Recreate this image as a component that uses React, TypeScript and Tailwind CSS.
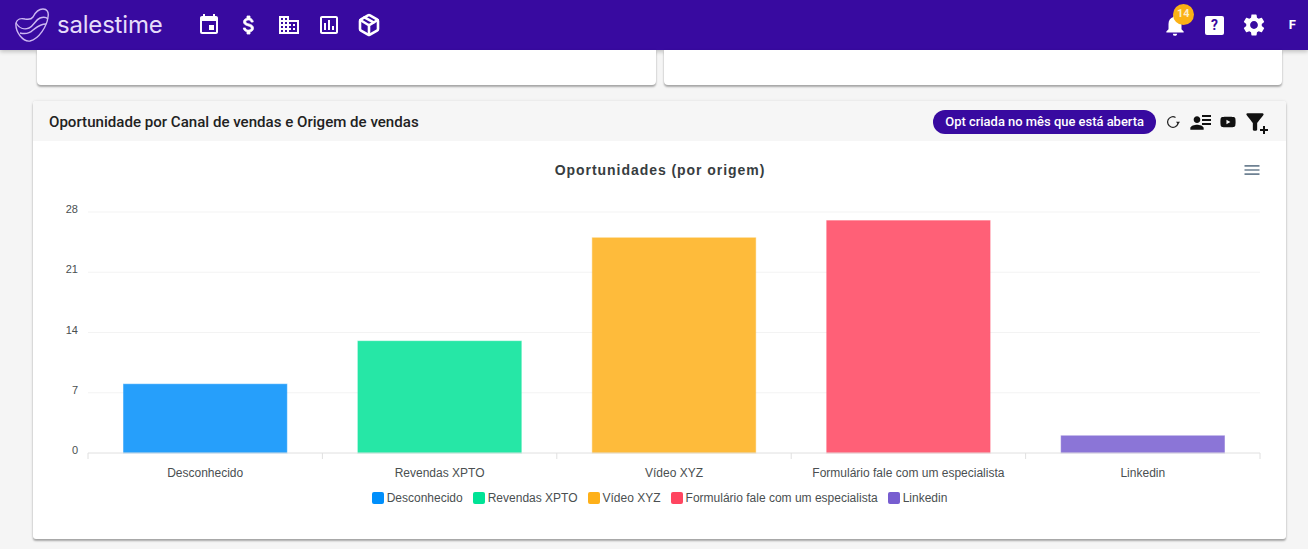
import { MdEvent, MdDomain, MdOutlineAssessment, MdNotifications, MdSettings, MdFilterAlt, MdMenu, MdPerson } from 'react-icons/md';
import { FaYoutube } from 'react-icons/fa';
import { LuPackage } from 'react-icons/lu';

const ROBOTO = "font-['Roboto',sans-serif]";

const bars = [
  { name: 'Desconhecido', value: 8, color: '#269ffb', legend: '#008ffb' },
  { name: 'Revendas XPTO', value: 13, color: '#26e7a6', legend: '#00e396' },
  { name: 'Vídeo XYZ', value: 25, color: '#febb3b', legend: '#feb019' },
  { name: 'Formulário fale com um especialista', value: 27, color: '#ff6077', legend: '#ff4560' },
  { name: 'Linkedin', value: 2, color: '#8b75d7', legend: '#775dd0' },
];

function Logo() {
  return (
    <svg width="34" height="34" viewBox="0 0 34 34" fill="none" stroke="#cdb8f2" strokeWidth="1.4" strokeLinejoin="round">
      <path d="M1 15c1-4 5-5 9-4 3 .6 6 1 8-2 2-4 5-8 10-8 4 0 6 3 5 8-1 9-9 22-18 24-7 1-15-9-14-18z" />
      <path d="M1 15c3 5 8 7 13 5 5-2 6-8 11-10 3-1 6-1 8 1" />
      <path d="M5 25c4 1 9 1 13-3 4-3 7-6 13-6" />
    </svg>
  );
}

function Money() {
  return (
    <svg width="24" height="24" viewBox="0 0 24 24" fill="white" stroke="white" strokeWidth="0.8">
      <path d="M11.8 10.9c-2.27-.59-3-1.2-3-2.15 0-1.09 1.01-1.85 2.7-1.85 1.78 0 2.44.85 2.5 2.1h2.21c-.07-1.72-1.12-3.3-3.21-3.81V3h-3v2.16c-1.94.42-3.5 1.68-3.5 3.61 0 2.31 1.91 3.46 4.7 4.13 2.5.6 3 1.48 3 2.41 0 .69-.49 1.79-2.7 1.79-2.06 0-2.87-.92-2.98-2.1h-2.2c.12 2.19 1.76 3.42 3.68 3.83V21h3v-2.15c1.95-.37 3.5-1.5 3.5-3.55 0-2.84-2.43-3.81-4.7-4.4z" />
    </svg>
  );
}

function Navbar() {
  return (
    <header className="flex h-[50px] items-center bg-[#380aa0] text-white shadow-[0_2px_4px_rgba(0,0,0,0.2)]">
      <div className="ml-[15px] flex w-[182px] items-center gap-[8px]">
        <Logo />
        <span className="font-['Inter',sans-serif] text-[24px] leading-none tracking-[-0.2px] text-[#e6dcfa]">salestime</span>
      </div>
      <nav className="flex items-center gap-[16px]">
        <MdEvent size={24} />
        <Money />
        <MdDomain size={24} />
        <MdOutlineAssessment size={24} />
        <LuPackage size={24} strokeWidth={2.6} />
      </nav>
      <div className="ml-auto flex items-center">
        <div className="relative">
          <MdNotifications size={26} />
          <span className={`${ROBOTO} absolute left-[11px] top-[-8px] flex h-[21px] w-[21px] items-center justify-center rounded-full bg-[#fbb116] text-[11px] font-bold text-[#fbeecb]`}>14</span>
        </div>
        <div className="ml-[17px] flex h-[19px] w-[19px] items-center justify-center rounded-[2px] bg-white">
          <span className={`${ROBOTO} text-[14px] font-bold leading-none text-[#380aa0]`}>?</span>
        </div>
        <MdSettings size={26} className="ml-[17px]" />
        <span className={`${ROBOTO} ml-[22px] mr-[12px] text-[13px] font-bold`}>F</span>
      </div>
    </header>
  );
}

function PersonList() {
  return (
    <span className="relative flex h-[22px] w-[22px] items-center">
      <MdPerson size={20} className="-ml-[3px] mt-[2px]" />
      <span className="absolute right-[1px] top-[4px] flex w-[9px] flex-col gap-[2px]">
        <span className="h-[2px] bg-[#111]" />
        <span className="h-[2px] bg-[#111]" />
        <span className="h-[2px] bg-[#111]" />
      </span>
    </span>
  );
}

function RefreshThin() {
  return (
    <svg width="16" height="16" viewBox="0 0 16 16" fill="none" stroke="#222" strokeWidth="1.2">
      <path d="M13 9.5A5.3 5.3 0 1 1 10.5 3.4" />
      <path d="M11 7.8h4l-2 2.6z" fill="#222" stroke="none" />
    </svg>
  );
}

function Chart() {
  const left = 88;
  const right = 1260;
  const base = 453;
  const unit = 241 / 28;
  const slot = (right - left) / bars.length;
  return (
    <svg viewBox="33 141 1253 398" className="block h-[398px] w-[1253px]" fontFamily="'Liberation Sans', sans-serif">
      <text x="660" y="175" textAnchor="middle" fontSize="14" fontWeight="700" letterSpacing="0.95" fill="#373d3f">Oportunidades (por origem)</text>
      {[28, 21, 14, 7, 0].map((v) => {
        const y = base - v * unit;
        return (
          <g key={v}>
            {v > 0 && <line x1={left} x2={right} y1={y} y2={y} stroke="#f3f3f3" />}
            <text x="78" y={y + 1} textAnchor="end" fontSize="11" fill="#4a4f51">{v}</text>
          </g>
        );
      })}
      {bars.map((b, i) => {
        const x = left + i * slot + 35.5;
        const h = b.value * unit;
        return <rect key={b.name} x={x} y={base - h} width={slot - 71} height={h} fill={b.color} stroke={b.color} strokeOpacity="0.5" />;
      })}
      <line x1={left} x2={right} y1={base} y2={base} stroke="#e0e0e0" />
      {[0, 1, 2, 3, 4, 5].map((i) => (
        <line key={i} x1={left + i * slot} x2={left + i * slot} y1={base} y2={base + 6} stroke="#e0e0e0" />
      ))}
      {bars.map((b, i) => (
        <text key={b.name} x={left + (i + 0.5) * slot} y="477" textAnchor="middle" fontSize="12" fill="#4a4f51">{b.name}</text>
      ))}
    </svg>
  );
}

function Legend() {
  return (
    <div className="absolute left-0 right-0 top-[350px] flex justify-center gap-[10px] font-['Liberation_Sans',sans-serif] text-[12px] leading-[14px] text-[#4a4f51]">
      {bars.map((b) => (
        <div key={b.name} className="flex items-center gap-[3px]">
          <span className="h-[12px] w-[12px] rounded-[2px]" style={{ backgroundColor: b.legend }} />
          {b.name}
        </div>
      ))}
    </div>
  );
}

export default function App() {
  return (
    <div className="h-[549px] overflow-hidden bg-[#f5f5f5]">
      <Navbar />
      <main className="pl-[33px] pr-[22px]">
        <div className="flex gap-[8px] pl-[4px] pr-[4px]">
          <div className="h-[35px] w-[619px] rounded-b-[4px] bg-white shadow-[0_2px_2px_rgba(0,0,0,0.3),0_0_2px_rgba(0,0,0,0.1)]" />
          <div className="h-[35px] w-[618px] rounded-b-[4px] bg-white shadow-[0_2px_2px_rgba(0,0,0,0.3),0_0_2px_rgba(0,0,0,0.1)]" />
        </div>
        <section className="mt-[16px] w-[1253px] overflow-hidden rounded-[3px] bg-white shadow-[0_2px_2px_rgba(0,0,0,0.3),0_0_3px_rgba(0,0,0,0.1)]">
          <div className={`${ROBOTO} flex h-[40px] items-center bg-[#f6f6f6] pl-[16px] pr-[18px] pt-[2px]`}>
            <h2 className="text-[15.08px] font-medium text-[#222]">Oportunidade por Canal de vendas e Origem de vendas</h2>
            <div className="ml-auto flex items-center text-[#111]">
              <span className="flex h-[24px] items-center rounded-full bg-[#380aa0] px-[12px] text-[12.95px] font-medium text-white">Opt criada no mês que está aberta</span>
              <span className="ml-[9px]"><RefreshThin /></span>
              <span className="ml-[9px]"><PersonList /></span>
              <FaYoutube size={16} className="ml-[8px]" />
              <span className="relative ml-[8px] h-[24px] w-[24px]">
                <MdFilterAlt size={26} className="absolute -left-[2px] -top-[1px]" />
                <svg width="10" height="10" viewBox="0 0 10 10" className="absolute -right-[1px] bottom-[-1px]" stroke="#111" strokeWidth="2">
                  <path d="M5 1v8M1 5h8" />
                </svg>
              </span>
            </div>
          </div>
          <div className="relative">
            <Chart />
            <Legend />
            <MdMenu size={20} className="absolute right-[24px] top-[19px] text-[#6e8192]" />
          </div>
        </section>
      </main>
    </div>
  );
}
